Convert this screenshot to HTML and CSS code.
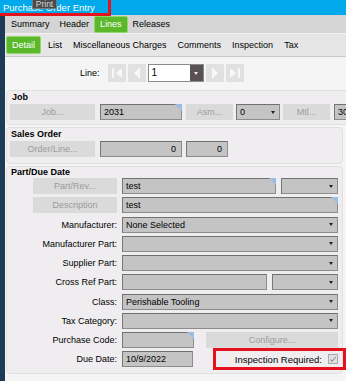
FILE: index.html
```html
<!DOCTYPE html>
<html lang="en">
<head>
<meta charset="UTF-8">
<title>Purchase Order Entry</title>
<link rel="stylesheet" href="styles.css">
</head>
<body>
<div class="titlebar">Purchase Order Entry</div>
<div class="tip">Print</div>
<div class="mark mark-title"></div>

<div class="main">
    <div class="tabs tabs-top">
        <span class="tab">Summary</span>
        <span class="tab">Header</span>
        <span class="tab on">Lines</span>
        <span class="tab">Releases</span>
    </div>
    <div class="tabs tabs-sub">
        <span class="tab on">Detail</span>
        <span class="tab">List</span>
        <span class="tab">Miscellaneous Charges</span>
        <span class="tab">Comments</span>
        <span class="tab">Inspection</span>
        <span class="tab">Tax</span>
    </div>

    <div class="linebar">
        <span class="lbl">Line:</span>
        <span class="nav"><svg width="18" height="18" viewBox="0 0 18 18"><rect x="4" y="4" width="2" height="10" fill="#f7f7f7"/><path d="M14 4 L8 9 L14 14 Z" fill="#f7f7f7"/></svg></span>
        <span class="nav"><svg width="18" height="18" viewBox="0 0 18 18"><path d="M12 3 L6 9 L12 15 Z" fill="#f7f7f7"/></svg></span>
        <span class="linebox"><span class="lineval">1</span><span class="linedrop"></span></span>
        <span class="nav"><svg width="18" height="18" viewBox="0 0 18 18"><path d="M6 3 L12 9 L6 15 Z" fill="#f7f7f7"/></svg></span>
        <span class="nav"><svg width="18" height="18" viewBox="0 0 18 18"><path d="M4 4 L10 9 L4 14 Z" fill="#f7f7f7"/><rect x="12" y="4" width="2" height="10" fill="#f7f7f7"/></svg></span>
    </div>

    <div class="panel panel-job">
        <div class="ptitle">Job</div>
        <div class="row">
            <span class="btn w85">Job...</span>
            <span class="fld w82 corner gap5">2031</span>
            <span class="btn w47 gap4">Asm...</span>
            <span class="fld sel w44 gap3">0</span>
            <span class="btn w47 gap3">Mtl...</span>
            <span class="fld w40 gap4">30</span>
        </div>
    </div>

    <div class="panel panel-so">
        <div class="ptitle">Sales Order</div>
        <div class="row">
            <span class="btn w85">Order/Line...</span>
            <span class="fld w82 num gap5">0</span>
            <span class="fld w42 num gap4">0</span>
        </div>
    </div>

    <div class="panel panel-part">
        <div class="ptitle">Part/Due Date</div>
        <div class="form">
            <div class="cell-l"><span class="btn w84">Part/Rev...</span></div>
            <div class="cell-r"><span class="fld corner grow">test</span><span class="fld sel w57 gap5"></span></div>

            <div class="cell-l"><span class="btn w84">Description</span></div>
            <div class="cell-r"><span class="fld corner grow">test</span></div>

            <div class="cell-l">Manufacturer:</div>
            <div class="cell-r"><span class="fld sel grow">None Selected</span></div>

            <div class="cell-l">Manufacturer Part:</div>
            <div class="cell-r"><span class="fld sel grow"></span></div>

            <div class="cell-l">Supplier Part:</div>
            <div class="cell-r"><span class="fld sel grow"></span></div>

            <div class="cell-l">Cross Ref Part:</div>
            <div class="cell-r"><span class="fld grow"></span><span class="fld sel w66 gap5"></span></div>

            <div class="cell-l">Class:</div>
            <div class="cell-r"><span class="fld sel grow">Perishable Tooling</span></div>

            <div class="cell-l">Tax Category:</div>
            <div class="cell-r"><span class="fld sel grow"></span></div>

            <div class="cell-l">Purchase Code:</div>
            <div class="cell-r"><span class="fld corner w72"></span><span class="btn grow gap12">Configure...</span></div>

            <div class="cell-l">Due Date:</div>
            <div class="cell-r">
                <span class="fld w71">10/9/2022</span>
                <span class="insp">Inspection Required:
                    <span class="chk"><svg width="9" height="9" viewBox="0 0 9 9"><path d="M1.5 4.5 L3.5 6.5 L7.5 1.5" fill="none" stroke="#9a9a9a" stroke-width="1.3"/></svg></span>
                </span>
            </div>
        </div>
    </div>
</div>

<div class="mark mark-insp"></div>
</body>
</html>
```

FILE: styles.css
```css
body{
    margin:0;
    width:346px;
    height:381px;
    overflow:hidden;
    position:relative;
    background:#1d3a57;
    font-family:"Liberation Sans", Arial, sans-serif;
    font-size:9px;
    color:#000;
}

.titlebar{
    height:15px;
    line-height:15px;
    padding-left:3px;
    background:#00a9ea;
    color:#fff;
    font-size:9.5px;
}

/* red annotation boxes */
.mark{
    position:absolute;
    box-sizing:border-box;
    border:3px solid #e5121e;
}
.mark-title{
    left:-3px;
    top:-3px;
    width:114px;
    height:19px;
}
.mark-insp{
    left:213px;
    top:348px;
    width:133px;
    height:22px;
}

.tip{
    position:absolute;
    left:32px;
    top:-3px;
    width:25px;
    height:12px;
    line-height:12px;
    box-sizing:border-box;
    background:#4a4a4a;
    border:1px solid #7a7a7a;
    color:#d6d6d6;
    text-align:center;
    font-size:8.5px;
    z-index:2;
}

.main{
    margin-left:5px;
    height:366px;
    background:#f6f5f6;
    overflow:hidden;
}

.tabs{
    display:flex;
    align-items:center;
}
.tab{
    padding:0 4px;
    border:1px solid transparent;
    border-radius:2px;
    white-space:nowrap;
}
.tab.on{
    background:#5bb82b;
    border-color:#93d66c;
    color:#fff;
}
.tabs-top{
    height:18px;
    padding-left:1px;
    background:#d5d5d5;
}
.tabs-top .tab{
    line-height:15px;
}
.tabs-top .tab.on{
    padding:0 5px;
}
.tabs-sub{
    height:22px;
    padding-left:1px;
    background:#e7e6e7;
    border-top:1px solid #f0f0f0;
    border-bottom:1px solid #c8c8c8;
}
.tabs-sub .tab{
    line-height:16px;
    padding:0 5px 0 4px;
}
.tabs-sub .tab.on{
    padding:0 5px;
    margin-right:2px;
}

.linebar{
    display:flex;
    align-items:center;
    gap:2px;
    height:32px;
    padding-left:75px;
}
.lbl{
    margin-right:6px;
}
.nav{
    width:18px;
    height:18px;
    background:#e1e1e1;
}
.nav svg{
    display:block;
}
.linebox{
    display:flex;
    width:56px;
    height:18px;
    box-sizing:border-box;
    border:1px solid #8a8a8a;
    background:#fff;
    font-size:10px;
}
.lineval{
    flex:1;
    padding-left:3px;
    line-height:16px;
}
.linedrop{
    width:13px;
    background:#5a5252;
    display:flex;
    align-items:center;
    justify-content:center;
}
.linedrop::after{
    content:"";
    border-left:2.5px solid transparent;
    border-right:2.5px solid transparent;
    border-top:3px solid #eee;
}

.panel{
    background:#efedef;
    border:1px solid #e2dfe2;
    border-radius:4px;
    margin:0 3px 2px 1px;
    padding:0 4px 3px 3px;
}
.panel-job{
    margin-top:1px;
    margin-right:-30px;
    padding-bottom:4px;
}
.panel-so{
    padding-bottom:6px;
}
.panel-part{
    height:203px;
}
.ptitle{
    font-weight:bold;
    line-height:12px;
    padding-left:2px;
}
.panel-so .ptitle{
    padding-left:1px;
}
.panel-part .ptitle{
    padding-left:1px;
    line-height:11px;
}

.row{
    display:flex;
    margin-top:1px;
}

.btn, .fld{
    height:16px;
    box-sizing:border-box;
    display:flex;
    align-items:center;
    white-space:nowrap;
    flex-shrink:0;
}
.btn{
    justify-content:center;
    background:#dbdadb;
    color:#9b9b9b;
}
.fld{
    position:relative;
    padding-left:3px;
    background:#c5c4c5;
    border:1px solid #8c8c8c;
    border-top-color:#707070;
    border-left-color:#777;
}
.num{
    justify-content:flex-end;
    padding-right:5px;
}
.sel::after{
    content:"";
    margin-left:auto;
    margin-right:4px;
    border-left:2.5px solid transparent;
    border-right:2.5px solid transparent;
    border-top:3px solid #222;
}
.corner::before{
    content:"";
    position:absolute;
    top:-1px;
    right:-1px;
    border-top:7px solid #9bbde3;
    border-left:7px solid transparent;
}

.grow{ flex:1; flex-shrink:1; }
.w40{ width:40px; }
.w42{ width:42px; }
.w44{ width:44px; }
.w47{ width:47px; }
.w57{ width:57px; }
.w66{ width:66px; }
.w71{ width:71px; }
.w72{ width:72px; }
.w82{ width:82px; }
.w84{ width:84px; }
.w85{ width:85px; }
.gap3{ margin-left:3px; }
.gap4{ margin-left:4px; }
.gap5{ margin-left:5px; }
.gap12{ margin-left:12px; }

.form{
    display:grid;
    grid-template-columns:108px 1fr;
    grid-auto-rows:16px;
    column-gap:4px;
    row-gap:3.25px;
}
.cell-l{
    display:flex;
    align-items:center;
    justify-content:flex-end;
    padding-right:1px;
    white-space:nowrap;
}
.cell-r{
    display:flex;
    align-items:center;
}

.insp{
    margin-left:auto;
    display:flex;
    align-items:center;
    gap:6px;
    font-size:9.5px;
}
.chk{
    width:10px;
    height:10px;
    box-sizing:border-box;
    border:1px solid #a8a8a8;
    background:#e2e2e2;
    display:flex;
    align-items:center;
    justify-content:center;
}
.chk svg{
    display:block;
}
```
